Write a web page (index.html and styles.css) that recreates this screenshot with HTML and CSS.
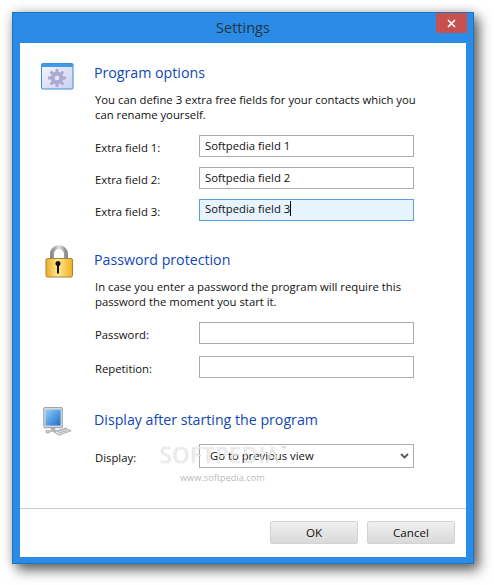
FILE: index.html
```html
<!DOCTYPE html>
<html lang="en">
<head>
<meta charset="utf-8">
<title>Settings</title>
<link rel="stylesheet" href="styles.css">
</head>
<body>
<div class="window">
  <header class="titlebar">
    <span class="title">Settings</span>
    <span class="close"><svg width="9" height="9" viewBox="0 0 9 9"><path d="M1 1L8 8M8 1L1 8" stroke="#fff" stroke-width="1.700"/></svg></span>
  </header>
  <div class="client">
    <main class="content">
      <section class="section first">
        <div class="icon">
          <svg width="33" height="27" viewBox="0 0 33 27">
            <defs><linearGradient id="pane" x1="0" y1="0" x2="1" y2="1"><stop offset="0" stop-color="#f4f5fd"/><stop offset="1" stop-color="#ccd0f0"/></linearGradient></defs>
            <rect x=".5" y=".5" width="31.500" height="25.500" rx="1" fill="url(#pane)" stroke="#3c8fd6"/>
            <rect x="1" y="1" width="31" height="3" fill="#3f9be6"/>
            <circle cx="16" cy="15" r="6.500" fill="#a9abd2"/>
            <path d="M16 6v18M7 15h18M9.600 8.600l12.800 12.800M22.400 8.600L9.600 21.400" stroke="#a9abd2" stroke-width="2.800"/>
            <circle cx="16" cy="15" r="2.300" fill="#e6e8f7"/>
          </svg>
        </div>
        <div class="body">
          <h2>Program options</h2>
          <p>You can define 3 extra free fields for your contacts which you<br>can rename yourself.</p>
          <div class="fields">
            <label class="row"><span class="label">Extra field 1:</span><input class="input" type="text" value="Softpedia field 1"></label>
            <label class="row"><span class="label">Extra field 2:</span><input class="input" type="text" value="Softpedia field 2"></label>
            <label class="row"><span class="label">Extra field 3:</span><span class="input focused">Softpedia field 3<i class="caret"></i></span></label>
          </div>
        </div>
      </section>
      <section class="section second">
        <div class="icon">
          <svg width="29" height="33" viewBox="0 0 29 33">
            <defs>
              <linearGradient id="gold" x1="0" y1="0" x2="1" y2="0"><stop offset="0" stop-color="#eeac22"/><stop offset=".45" stop-color="#fde992"/><stop offset="1" stop-color="#f2ae1c"/></linearGradient>
              <linearGradient id="steel" x1="0" y1="0" x2="1" y2="0"><stop offset="0" stop-color="#8c8c8c"/><stop offset=".5" stop-color="#e2e2e2"/><stop offset="1" stop-color="#8a8a8a"/></linearGradient>
            </defs>
            <path d="M7 15V9a7 7 0 0 1 14 0v6" fill="none" stroke="url(#steel)" stroke-width="4"/>
            <rect x="1" y="13.500" width="26.500" height="18.500" rx="1.500" fill="url(#gold)" stroke="#a8853c"/>
            <circle cx="13" cy="18.500" r="2.500" fill="#111"/>
            <rect x="12" y="18.500" width="2" height="10" fill="#111"/>
          </svg>
        </div>
        <div class="body">
          <h2>Password protection</h2>
          <p class="tight">In case you enter a password the program will require this<br>password the moment you start it.</p>
          <div class="fields">
            <label class="row"><span class="label">Password:</span><input class="input" type="password"></label>
            <label class="row"><span class="label">Repetition:</span><input class="input" type="password"></label>
          </div>
        </div>
      </section>
      <section class="section third">
        <div class="icon">
          <svg width="30" height="30" viewBox="0 0 34 34">
            <defs><linearGradient id="screen" x1="0" y1="0" x2="1" y2="1"><stop offset="0" stop-color="#8fcdf7"/><stop offset="1" stop-color="#1d6fd0"/></linearGradient></defs>
            <path d="M10 23h5v3l5 2H6l4-2z" fill="#b4b8bc"/>
            <rect x="2" y=".5" width="21" height="23" rx="1" fill="#d5d8da" stroke="#8d9397"/>
            <rect x="4" y="3" width="17" height="18" fill="url(#screen)"/>
            <path d="M13 28l14-4 6 3-14 5z" fill="#dfe2e4" stroke="#8a8f93" stroke-width=".8"/>
            <path d="M17 28l10-3M19 29.500l10-3" stroke="#9ea3a6" stroke-width=".8"/>
            <ellipse cx="6.500" cy="28" rx="2.500" ry="1.600" fill="#c9cccf" stroke="#8a8f93" stroke-width=".6"/>
          </svg>
        </div>
        <div class="body">
          <h2>Display after starting the program</h2>
          <div class="fields compact">
            <div class="row select-row"><span class="label">Display:</span>
              <span class="input select">Go to previous view<svg width="9" height="6" viewBox="0 0 9 6"><path d="M1 1l3.500 3.500L8 1" fill="none" stroke="#555" stroke-width="1.800"/></svg></span>
            </div>
          </div>
        </div>
      </section>
    </main>
    <footer class="footer">
      <button class="btn" type="button">OK</button>
      <button class="btn" type="button">Cancel</button>
    </footer>
    <div class="watermark"><span class="wm-big">SOFTPEDIA<sup class="wm-tm">™</sup></span><span class="wm-url">www.softpedia.com</span></div>
  </div>
</div>
</body>
</html>
```

FILE: styles.css
```css
* { box-sizing: border-box; }
html, body { margin: 0; height: 100%; }
body {
  background: #fff;
  padding: 12px 0 0 12px;
  font-family: "Open Sans", "Noto Sans", sans-serif;
  font-size: 11.300px;
  color: #111;
  overflow: hidden;
}
.window {
  width: 462px;
  height: 552px;
  background: #2a8ce6;
  border: 1px solid #1f74c2;
  box-shadow: 5px 6px 12px rgba(0,0,0,.6), 0 0 10px rgba(0,0,0,.18);
  padding: 0 7px 6px;
  display: flex;
  flex-direction: column;
}
.titlebar {
  height: 30px;
  flex: none;
  position: relative;
  display: flex;
  align-items: center;
  justify-content: center;
  padding-bottom: 2px;
}
.title { font-size: 14.500px; color: #26343f; }
.close {
  position: absolute;
  top: 0;
  right: -1px;
  width: 31px;
  height: 20px;
  background: #c75050;
  display: flex;
  align-items: center;
  justify-content: center;
}
.client {
  flex: 1;
  background: #fff;
  position: relative;
  display: flex;
  flex-direction: column;
}
.content { flex: 1; padding: 20px 0 0 21px; }
.section { display: flex; }
.second { margin-top: 29px; }
.third { margin-top: 32px; }
.icon { width: 53px; flex: none; }
.second .icon { margin-top: -5px; padding-left: 4px; }
.third .icon { margin-top: -3px; padding-left: 1px; }
h2 {
  margin: 0;
  font-size: 14.200px;
  font-weight: 400;
  line-height: 20px;
  color: #0f48b4;
}
p {
  margin: 9px 0 0 1px;
  line-height: 15px;
  white-space: nowrap;
}
.fields { margin-top: 13px; display: flex; flex-direction: column; gap: 10px; }
.second .fields { gap: 12px; }
.compact { margin-top: 14px; }
.row { display: flex; align-items: center; height: 22px; }
.select-row { height: 24px; }
.label { width: 105px; padding: 2px 0 0 1px; flex: none; }
.input {
  width: 215px;
  height: 22px;
  flex: none;
  border: 1px solid #ababab;
  background: #fff;
  padding: 0 5px 2px;
  font: 11.300px/17px "Open Sans", "Noto Sans", sans-serif;
  color: #111;
  outline: none;
  display: block;
}
.focused { border-color: #5e9fe0; background: #e6f4fe; }
.caret {
  display: inline-block;
  width: 1px;
  height: 15px;
  background: #000;
  vertical-align: -3px;
}
.select {
  height: 24px;
  padding: 0 4px 1px 10px;
  display: flex;
  align-items: center;
  justify-content: space-between;
}
.footer {
  flex: none;
  height: 49px;
  border-top: 1px solid #c9c9c9;
  display: flex;
  justify-content: flex-end;
  gap: 9px;
  padding: 12px 11px 0 0;
}
.btn {
  width: 88px;
  height: 23px;
  padding: 0;
  border: 1px solid #d2d2d2;
  border-radius: 2px;
  background: linear-gradient(#f0f0f0, #d9d9d9);
  font: 11.600px "Open Sans", "Noto Sans", sans-serif;
  color: #111;
}
.watermark {
  position: absolute;
  left: 140px;
  top: 399px;
  width: 140px;
  display: flex;
  flex-direction: column;
  align-items: flex-start;
  pointer-events: none;
}
.wm-big {
  font-size: 21px;
  line-height: 26px;
  letter-spacing: 1.300px;
  color: rgba(255,255,255,.75);
  text-shadow: 0 0 1px rgba(0,0,0,.3);
  white-space: nowrap;
}
.wm-tm { font-size: 7px; line-height: 0; vertical-align: 12px; color: #bbb; text-shadow: none; }
.wm-url {
  margin: 4px 0 0 20px;
  font-size: 9.200px;
  line-height: 12px;
  color: rgba(120,120,120,.55);
}
```
